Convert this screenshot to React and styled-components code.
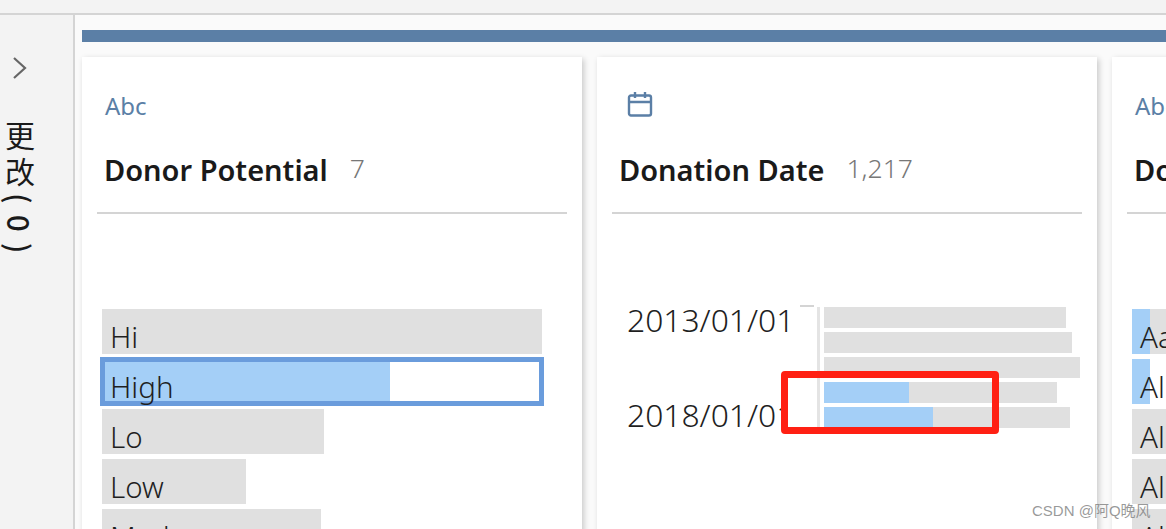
import React from 'react';
import styled, { createGlobalStyle } from 'styled-components';

const GlobalStyle = createGlobalStyle`
  html, body { margin: 0; padding: 0; height: 100%; overflow: hidden; background: #fafafa; }
  body { font-family: "Noto Sans", "Noto Sans CJK SC", sans-serif; color: #1f1f1f; }
`;

const Page = styled.div`
  position: relative;
  width: 1166px;
  height: 529px;
  overflow: hidden;
  display: flex;
  flex-direction: column;
`;

const TopBar = styled.div`
  height: 13px;
  flex: none;
  background: #f3f3f3;
  border-bottom: 2px solid #d4d4d4;
`;

const Body = styled.div`
  flex: 1;
  display: flex;
  min-height: 0;
`;

const Sidebar = styled.div`
  width: 75px;
  flex: none;
  box-sizing: border-box;
  background: #f3f3f3;
  border-right: 2px solid #d4d4d4;
  padding: 41px 0 0 5px;
`;

const Chevron = styled.svg`
  display: block;
  width: 16px;
  height: 24px;
  margin: 0 0 41px 7px;
`;

const ChangesLabel = styled.div`
  writing-mode: vertical-rl;
  font-family: "Noto Sans CJK SC", sans-serif;
  font-size: 30px;
  line-height: 30px;
  letter-spacing: 6px;
  color: #1a1a1a;
`;

const ChangesCount = styled.span`
  font-weight: 500;
  letter-spacing: 11px;
`;

const Main = styled.div`
  flex: 1;
  min-width: 0;
  padding: 15px 0 0 7px;
`;

const ColourBar = styled.div`
  height: 12px;
  background: #5b7fa6;
  margin-bottom: 15px;
`;

const Cards = styled.div`
  display: flex;
  gap: 15px;
`;

const Card = styled.section`
  flex: none;
  width: 500px;
  height: 480px;
  box-sizing: border-box;
  padding: 0 15px;
  background: #fff;
  box-shadow: 2px 2px 6px rgba(0, 0, 0, 0.2);
`;

const CardHeader = styled.header`
  height: 157px;
  box-sizing: border-box;
  padding: 31px 0 0 8px;
  border-bottom: 2px solid #d4d4d4;
`;

const TypeRow = styled.div`
  height: 34px;
  margin-bottom: 30px;
  display: flex;
  align-items: center;
`;

const TypeText = styled.span`
  font-size: 24px;
  color: #5b7fa6;
`;

const CalendarIcon = styled.svg`
  width: 26px;
  height: 26px;
  margin: -3px 0 0 7px;
`;

const TitleRow = styled.div`
  display: flex;
  align-items: baseline;
  gap: 22px;
  white-space: nowrap;
`;

const Title = styled.h2`
  margin: 0 0 0 -1px;
  font-size: 29px;
  line-height: 36px;
  font-weight: 600;
  color: #1a1a1a;
`;

const Count = styled.span`
  position: relative;
  top: -3px;
  font-size: 26.5px;
  font-weight: 300;
  color: #777;
`;

const ValueList = styled.div`
  padding: 95px 0 0 5px;
  display: flex;
  flex-direction: column;
  gap: 5px;
`;

const ValueBar = styled.div`
  box-sizing: border-box;
  height: 45px;
  flex: none;
  width: ${p => p.$width}px;
  padding: 5px 0 0 8px;
  font-size: 29.5px;
  font-weight: 300;
  line-height: 45px;
  white-space: nowrap;
  background: ${p => p.$fill != null
    ? `linear-gradient(to right, #a4cff7 ${p.$fill}px, ${p.$rest} ${p.$fill}px)`
    : '#e0e0e0'};
  ${p => p.$selected && 'box-shadow: 0 0 0 2px #6a9cdc, inset 0 0 0 3px #6a9cdc;'}
`;

const DateChart = styled.div`
  padding: 93px 0 0 15px;
  display: flex;
`;

const DateLabels = styled.div`
  width: 190px;
  flex: none;
  margin-top: -7px;
  font-size: 31.8px;
  font-weight: 300;
  line-height: 40px;
  display: flex;
  flex-direction: column;
  gap: 55px;
`;

const Axis = styled.div`
  position: relative;
  width: 3px;
  height: 120px;
  background: #e4e4e4;
  margin: 0 4px 0 0;
  &::before {
    content: '';
    position: absolute;
    top: -2px;
    left: -17px;
    width: 14px;
    height: 2px;
    background: #d4d4d4;
  }
`;

const DateBars = styled.div`
  display: flex;
  flex-direction: column;
  gap: 4px;
`;

const DateBar = styled.div`
  height: 21px;
  width: ${p => p.$width}px;
  background: ${p => p.$fill
    ? `linear-gradient(to right, #a4cff7 ${p.$fill}px, #e0e0e0 ${p.$fill}px)`
    : '#e0e0e0'};
`;

const Callout = styled.div`
  position: absolute;
  left: 781px;
  top: 371px;
  width: 218px;
  height: 63px;
  box-sizing: border-box;
  border: 7px solid #ff2013;
  border-radius: 4px;
`;

const Watermark = styled.div`
  position: absolute;
  left: 1032px;
  top: 501px;
  font-family: "Liberation Sans", "Noto Sans CJK SC", sans-serif;
  font-size: 15px;
  line-height: 20px;
  color: rgba(120, 120, 120, 0.75);
  white-space: nowrap;
`;

const potentials = [
  { label: 'Hi', width: 440 },
  { label: 'High', width: 440, fill: 288, rest: '#fff', selected: true },
  { label: 'Lo', width: 222 },
  { label: 'Low', width: 144 },
  { label: 'Med', width: 219 },
];

const dateBars = [
  { width: 242 },
  { width: 248 },
  { width: 256 },
  { width: 233, fill: 85 },
  { width: 246, fill: 109 },
];

const donors = [
  { label: 'Aa', width: 60, fill: 18, rest: '#e0e0e0' },
  { label: 'Al', width: 60, fill: 18, rest: '#fff' },
  { label: 'Al', width: 60 },
  { label: 'Al', width: 60 },
  { label: 'Al', width: 60 },
];

const CardTop = ({ type, title, count }) => (
  <CardHeader>
    <TypeRow>{type}</TypeRow>
    <TitleRow>
      <Title>{title}</Title>
      {count && <Count>{count}</Count>}
    </TitleRow>
  </CardHeader>
);

const Values = ({ items }) => (
  <ValueList>
    {items.map((item, i) => (
      <ValueBar key={i} $width={item.width} $fill={item.fill} $rest={item.rest} $selected={item.selected}>
        {item.label}
      </ValueBar>
    ))}
  </ValueList>
);

const App = () => (
  <Page>
    <GlobalStyle />
    <TopBar />
    <Body>
      <Sidebar>
        <Chevron viewBox="0 0 16 24" fill="none" stroke="#666" strokeWidth="2.2">
          <path d="M2 2 L13 12 L2 22" />
        </Chevron>
        <ChangesLabel>更改<ChangesCount>(0)</ChangesCount></ChangesLabel>
      </Sidebar>
      <Main>
        <ColourBar />
        <Cards>
          <Card>
            <CardTop type={<TypeText>Abc</TypeText>} title="Donor Potential" count="7" />
            <Values items={potentials} />
          </Card>
          <Card>
            <CardTop
              type={
                <CalendarIcon viewBox="0 0 26 26" fill="none" stroke="#5b7fa6" strokeWidth="2.4">
                  <rect x="2" y="4.5" width="22" height="20" rx="2" />
                  <path d="M2 11 H24 M8 1 V7 M18 1 V7" />
                </CalendarIcon>
              }
              title="Donation Date"
              count="1,217"
            />
            <DateChart>
              <DateLabels>
                <span>2013/01/01</span>
                <span>2018/01/01</span>
              </DateLabels>
              <Axis />
              <DateBars>
                {dateBars.map((bar, i) => (
                  <DateBar key={i} $width={bar.width} $fill={bar.fill} />
                ))}
              </DateBars>
            </DateChart>
          </Card>
          <Card>
            <CardTop type={<TypeText>Abc</TypeText>} title="Do" />
            <Values items={donors} />
          </Card>
        </Cards>
      </Main>
    </Body>
    <Callout />
    <Watermark>CSDN @阿Q晚风</Watermark>
  </Page>
);

export default App;
